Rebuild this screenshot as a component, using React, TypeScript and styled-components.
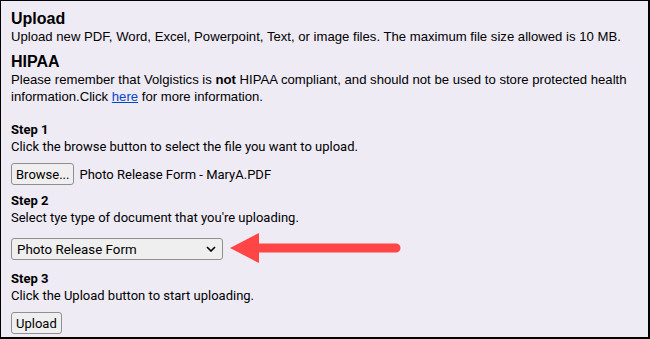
import React from "react";
import styled, { createGlobalStyle } from "styled-components";

const Global = createGlobalStyle`
  html, body { margin: 0; padding: 0; }
  body { width: 650px; height: 339px; overflow: hidden; background: #ffffff; }
`;

const Frame = styled.div`
  box-sizing: border-box;
  width: 650px;
  height: 339px;
  background: #eeebf5;
  border-style: solid;
  border-color: #000;
  border-width: 1px 2px 2px 1px;
  padding: 9px 10px 0 10px;
  font-family: "Liberation Sans", Arial, sans-serif;
  font-size: 13.15px;
  color: #000;
`;

const Section = styled.section<{ $gap?: number }>`
  margin-bottom: ${(p) => p.$gap ?? 0}px;
`;

const Heading = styled.h2`
  margin: 0;
  font-size: 16px;
  font-weight: bold;
  line-height: 18px;
`;

const Para = styled.p`
  margin: 0;
  line-height: 17px;
`;

const Link = styled.a`
  color: #0645c8;
  text-decoration: underline;
`;

const StepBlock = styled.div`
  font-family: Roboto, "Liberation Sans", sans-serif;
  font-size: 13px;
  display: flex;
  flex-direction: column;
`;

const StepTitle = styled.div`
  font-weight: bold;
  line-height: 17px;
`;

const StepText = styled.div`
  line-height: 17px;
`;

const Row = styled.div<{ $top?: number; $bottom?: number }>`
  display: flex;
  align-items: center;
  gap: 5px;
  margin: ${(p) => p.$top ?? 8}px 0 ${(p) => p.$bottom ?? 7}px 0;
`;

const Btn = styled.button`
  font-family: Roboto, "Liberation Sans", sans-serif;
  font-size: 13px;
  height: 22px;
  padding: 0 4px;
  background: #efefef;
  border: 1px solid #8f8f8f;
  border-radius: 3px;
  color: #000;
`;

const SelectBox = styled.div`
  box-sizing: border-box;
  width: 212px;
  height: 22px;
  display: flex;
  align-items: center;
  justify-content: space-between;
  padding: 0 6px 0 5px;
  background: #efefef;
  border: 1px solid #8f8f8f;
  border-radius: 3px;
  font-size: 13.33px;
`;

const Arrow = styled.svg`
  display: block;
  margin: -6px 0 -6px 2px;
`;

export default function App() {
  return (
    <>
      <Global />
      <Frame>
        <Section $gap={8}>
          <Heading>Upload</Heading>
          <Para>
            Upload new PDF, Word, Excel, Powerpoint, Text, or image files. The maximum file size allowed is 10 MB.
          </Para>
        </Section>
        <Section $gap={16}>
          <Heading>HIPAA</Heading>
          <Para>
            Please remember that Volgistics is <b>not</b> HIPAA compliant, and should not be used to store protected health
            information.Click <Link href="#">here</Link> for more information.
          </Para>
        </Section>
        <StepBlock>
          <StepTitle>Step 1</StepTitle>
          <StepText>Click the browse button to select the file you want to upload.</StepText>
          <Row>
            <Btn>Browse...</Btn>
            <span>Photo Release Form - MaryA.PDF</span>
          </Row>
          <StepTitle>Step 2</StepTitle>
          <StepText>Select tye type of document that you're uploading.</StepText>
          <Row $top={12} $bottom={10}>
            <SelectBox>
              <span>Photo Release Form</span>
              <svg width="10" height="6" viewBox="0 0 10 6">
                <path d="M1 1 L5 5 L9 1" fill="none" stroke="#000" strokeWidth="1.6" />
              </svg>
            </SelectBox>
            <Arrow width="172" height="32" viewBox="0 0 172 32">
              <polygon points="0,15 29,0 29,30" fill="#ff4545" />
              <line x1="26" y1="15" x2="166" y2="15" stroke="#ff4545" strokeWidth="9" strokeLinecap="round" />
            </Arrow>
          </Row>
          <StepTitle>Step 3</StepTitle>
          <StepText>Click the Upload button to start uploading.</StepText>
          <Row>
            <Btn>Upload</Btn>
          </Row>
        </StepBlock>
      </Frame>
    </>
  );
}
